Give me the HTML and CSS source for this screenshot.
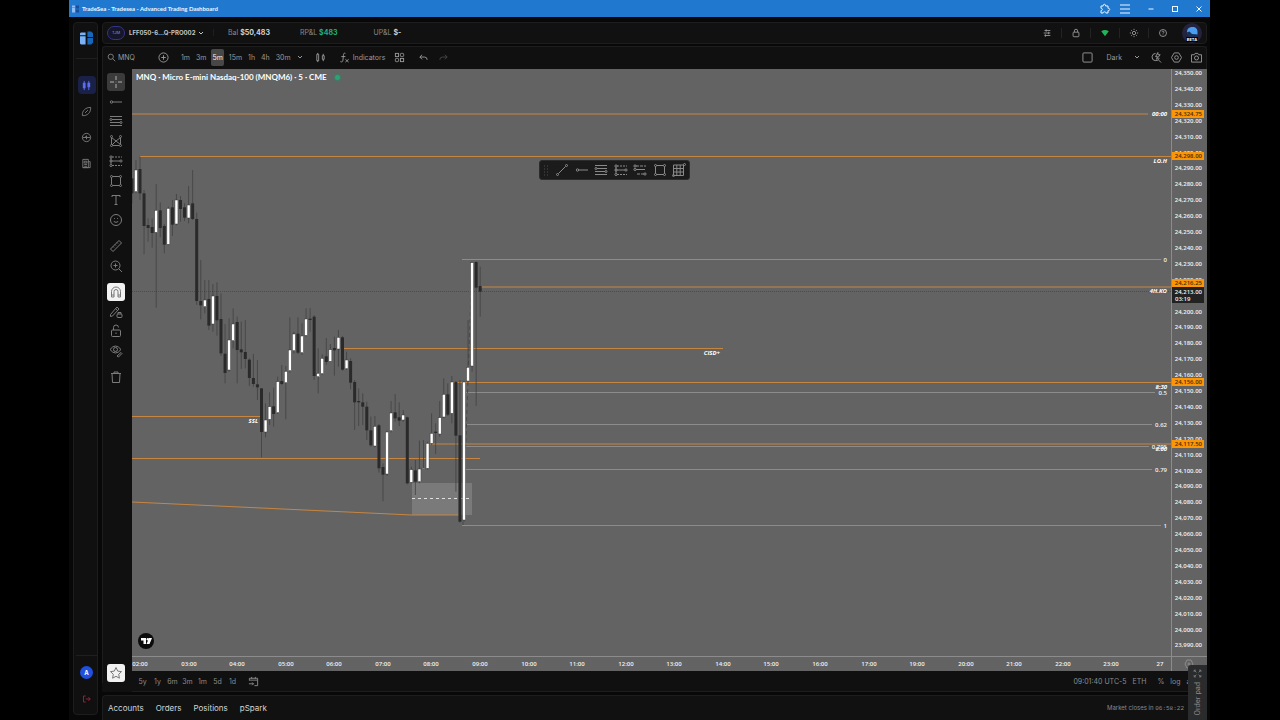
FILE: index.html
```html
<!DOCTYPE html>
<html lang="en">
<head>
    <meta charset="utf-8">
    <title>TradeSea - Tradesea - Advanced Trading Dashboard</title>
    <link rel="stylesheet" href="styles.css">
</head>
<body>
    <svg class="symbols" aria-hidden="true">
        <symbol id="i-chevron" viewBox="0 0 6 6"><path d="M1 2l2 2 2-2"/></symbol>
        <symbol id="i-ray" viewBox="0 0 14 14"><circle cx="2.5" cy="7" r="1.2"/><path d="M3.7 7H13"/></symbol>
        <symbol id="i-fib" viewBox="0 0 14 14"><path d="M1 2.500h12M3 5.500h10M1 8.500h10M1 11.500h12"/><circle cx="2" cy="5.500" r="1"/><circle cx="12" cy="8.500" r="1"/></symbol>
        <symbol id="i-long" viewBox="0 0 14 14"><path d="M3 3h10M3 11.500h10" stroke-dasharray="2 1"/><path d="M2 4v6M3 7h8"/><circle cx="2" cy="3" r="1.100"/><circle cx="2" cy="7" r="1.100"/><circle cx="2" cy="11.500" r="1.100"/><circle cx="12" cy="7" r="1.100"/></symbol>
        <symbol id="i-short" viewBox="0 0 14 14"><path d="M3 3h10M4 11h7" stroke-dasharray="3 1"/><path d="M3 6.500h9"/><circle cx="2" cy="6.500" r="1.100"/><circle cx="12" cy="11" r="1.100"/><circle cx="2" cy="3" r="1.100"/></symbol>
        <symbol id="i-rect" viewBox="0 0 14 14"><path d="M3.500 2.500h7M3.500 11.500h7M2.500 3.500v7M11.500 3.500v7"/><circle cx="2.500" cy="2.500" r="1"/><circle cx="11.500" cy="2.500" r="1"/><circle cx="2.500" cy="11.500" r="1"/><circle cx="11.500" cy="11.500" r="1"/></symbol>
    </svg>

    <div class="window">
        <header class="titlebar">
            <svg class="favicon" viewBox="0 0 14 14"><path fill="#8fbdf5" d="M0 0h6v4H0zM0 5h6v9H0z"/><path fill="#154f9d" d="M8 0h6v6H8zM8 8h6v6H8z"/></svg>
            <span class="window-title">TradeSea - Tradesea - Advanced Trading Dashboard</span>
            <div class="window-buttons">
                <button aria-label="Extensions"><svg viewBox="0 0 12 12"><path d="M2 3h2.200c-.6-2.300 3-2.300 2.400 0H9v2.300c2.300-.5 2.300 2.800 0 2.300V10H6.800C7 8.300 4 8.300 4.200 10H2V7.600c1.800.2 1.800-2.500 0-2.300z"/></svg></button>
                <button aria-label="Menu"><svg viewBox="0 0 12 12"><path d="M1 2h10M1 6h10M1 10h10"/></svg></button>
                <button class="spaced" aria-label="Minimize"><svg viewBox="0 0 12 12"><path d="M3.500 6h5"/></svg></button>
                <button class="spaced" aria-label="Maximize"><svg viewBox="0 0 12 12"><rect x="3.500" y="3.500" width="5" height="5"/></svg></button>
                <button class="spaced" aria-label="Close"><svg viewBox="0 0 12 12"><path d="M3.500 3.500l5 5M8.500 3.500l-5 5"/></svg></button>
            </div>
        </header>

        <div class="app">
            <nav class="sidebar">
                <a class="logo" href="#" aria-label="TradeSea"><svg viewBox="0 0 14 14"><path fill="#79b2f8" d="M1 1h5v3H0V2zM0 5h6v9H1l-1-1z"/><path fill="#1467bd" d="M8 0h4l2 2v4H8zM8 7h6v5l-2 2H8z"/></svg></a>
                <a class="nav-link active" href="#" aria-label="Chart"><svg viewBox="0 0 12 12"><path d="M3.500 1v10M8.500 1v10"/><path class="thick" d="M3.500 3v6M8.500 3v5"/></svg></a>
                <a class="nav-link" href="#" aria-label="Explore"><svg viewBox="0 0 12 12"><path d="M10.500 1.500C5 1.500 1 5 1.500 10.500 7 11 11 7 10.500 1.500zM4.500 7.500l3-3"/></svg></a>
                <a class="nav-link" href="#" aria-label="Replay"><svg viewBox="0 0 12 12"><circle cx="6" cy="6" r="4.500"/><path d="M2 6h8M6 4v4M4 6l2-1.500"/></svg></a>
                <a class="nav-link" href="#" aria-label="News"><svg viewBox="0 0 12 12"><path d="M2 1.500h6v9H2zM8 4h2v6.500H2M3.500 3.500h3v2h-3zM3.500 7h3M3.500 9h3"/></svg></a>
                <div class="sidebar-bottom">
                    <a class="user" href="#">A</a>
                    <button class="logout" aria-label="Log out"><svg viewBox="0 0 12 12"><path d="M5 2H2v8h3M5 6h6M8.500 3.500L11 6 8.500 8.500"/></svg></button>
                </div>
            </nav>

            <main class="main">
                <section class="account-bar">
                    <span class="pill">TJM</span>
                    <button class="account">LFF050-6...Q-PRO002 <svg class="chevron"><use href="#i-chevron"/></svg></button>
                    <span class="stat first">Bal <b>$50,483</b></span>
                    <span class="stat">RP&amp;L <b class="gain">$483</b></span>
                    <span class="stat">UP&amp;L <b>$-</b></span>
                    <div class="status-icons">
                        <button aria-label="Layout"><svg viewBox="0 0 12 12"><path d="M3 3h7M2 6h8M3 9h7M5 1.500v3M8 4.500v3M4 7.500v3"/></svg></button>
                        <button aria-label="Lock"><svg viewBox="0 0 12 12"><rect x="2.500" y="5" width="7" height="5.500" rx="1"/><path d="M4 5V3.500a2 2 0 0 1 4 0V5"/></svg></button>
                        <button aria-label="Connection"><svg viewBox="0 0 12 12"><path class="wifi" d="M1.500 4q4.500-3 9 0L6 10z"/></svg></button>
                        <button aria-label="Theme"><svg viewBox="0 0 12 12"><circle cx="6" cy="6" r="2"/><path d="M6 1v1.500M6 9.500V11M1 6h1.500M9.500 6H11M2.500 2.500l1 1M8.500 8.500l1 1M9.500 2.500l-1 1M3.500 8.500l-1 1"/></svg></button>
                        <button aria-label="Help"><svg viewBox="0 0 12 12"><circle cx="6" cy="6" r="4.200"/><path d="M4.800 5c0-1.800 2.600-1.500 2.400 0C7.100 5.800 6 5.800 6 6.800M6 8v.6"/></svg></button>
                    </div>
                    <div class="avatar">
                        <svg viewBox="0 0 14 10"><path fill="#4a9df0" d="M2 5C2 1 5 0 7.500 0 11 0 12.500 2 12.500 5V8H4L2 6.500z"/><path fill="#153057" d="M1.500 5.500l3-1L7 7l6 .5V10H4z"/></svg>
                        <span class="beta">BETA</span>
                    </div>
                </section>

                <section class="chart-panel">
                    <div class="toolbar">
                        <button class="search"><svg class="icon" viewBox="0 0 12 12"><circle cx="5" cy="5" r="3.500"/><path d="M7.500 7.500L11 11"/></svg>MNQ</button>
                        <button class="add" aria-label="Compare"><svg class="icon" viewBox="0 0 12 12"><circle cx="6" cy="6" r="5"/><path d="M6 3.500v5M3.500 6h5"/></svg></button>
                        <div class="intervals">
                            <button>1m</button>
                            <button>3m</button>
                            <button class="selected">5m</button>
                            <button>15m</button>
                            <button>1h</button>
                            <button>4h</button>
                            <button>30m</button>
                            <button aria-label="More intervals"><svg class="chevron"><use href="#i-chevron"/></svg></button>
                        </div>
                        <button aria-label="Candles"><svg class="icon" viewBox="0 0 12 12"><path d="M2 2.500h2v7H2zM3 1v1.500M3 9.500V11M8 4h2v4H8zM9 2v2M9 8v2"/></svg></button>
                        <button class="indicators"><svg class="icon" viewBox="0 0 12 12"><path d="M7 1.500C5 .8 5 2 4.800 4L4.300 9C4 11 3 11 1.500 10.500M2.500 5H7M7 8l3.500 3M10.500 8L7 11"/></svg>Indicators</button>
                        <button aria-label="Templates"><svg class="icon" viewBox="0 0 12 12"><rect x="1.500" y="1.500" width="3.500" height="3.500"/><rect x="7" y="1.500" width="3.500" height="3.500" rx="1"/><rect x="1.500" y="7" width="3.500" height="3.500" rx="1"/><rect x="7" y="7" width="3.500" height="3.500"/></svg></button>
                        <div class="history">
                            <button aria-label="Undo"><svg class="icon" viewBox="0 0 12 12"><path d="M4.500 3L2 5.500 4.500 8M2 5.500h5q3 0 3 3"/></svg></button>
                            <button class="off" aria-label="Redo"><svg class="icon" viewBox="0 0 12 12"><path d="M7.500 3L10 5.500 7.500 8M10 5.500H5q-3 0-3 3"/></svg></button>
                        </div>
                        <div class="toolbar-right">
                            <button aria-label="Layout setup"><svg class="icon" viewBox="0 0 12 12"><rect x="1" y="1" width="10" height="10" rx="1"/></svg></button>
                            <button class="theme">Dark <svg class="chevron"><use href="#i-chevron"/></svg></button>
                            <button aria-label="Quick search"><svg class="icon" viewBox="0 0 12 12"><path d="M5 1.500A4 4 0 1 0 9 6.500M8 8.500l3 3M7.500.500L5 5h2L6 8l4-5H7.500z"/></svg></button>
                            <button aria-label="Settings"><svg class="icon" viewBox="0 0 12 12"><path d="M3.500 1h5l3 5-3 5h-5l-3-5z"/><circle cx="6" cy="6" r="2"/></svg></button>
                            <button aria-label="Snapshot"><svg class="icon" viewBox="0 0 12 12"><path d="M.5 3h3l1-1.500h3l1 1.500h3v8H.5z"/><circle cx="6" cy="6.500" r="2.200"/></svg></button>
                        </div>
                    </div>

                    <div class="chart-row">
                        <div class="tools">
                            <div class="tool-group lines">
                                <button class="selected" aria-label="Crosshair"><svg viewBox="0 0 14 14"><path d="M7 1v4M7 9v4M1 7h4M9 7h4M6.700 7h.6"/></svg></button>
                                <button aria-label="Horizontal ray"><svg><use href="#i-ray"/></svg></button>
                                <button aria-label="Fib retracement"><svg><use href="#i-fib"/></svg></button>
                                <button aria-label="Patterns"><svg viewBox="0 0 14 14"><path d="M2.500 10.500v-7L7 7l4.500-3.500v7L7 7l-4 4M4 11.500h6"/><circle cx="2.500" cy="2.500" r="1"/><circle cx="11.500" cy="2.500" r="1"/><circle cx="2.500" cy="11.500" r="1"/><circle cx="11.500" cy="11.500" r="1"/></svg></button>
                                <button aria-label="Position"><svg><use href="#i-long"/></svg></button>
                                <button aria-label="Rectangle"><svg><use href="#i-rect"/></svg></button>
                                <button aria-label="Text"><svg viewBox="0 0 14 14"><path d="M3 4V2.500h8V4M7 2.500v9M5.500 11.500h3"/></svg></button>
                                <button aria-label="Icons"><svg viewBox="0 0 14 14"><circle cx="7" cy="7" r="5.500"/><path d="M5 5.500h.8M8.200 5.500H9M4.800 8.500q2.200 1.800 4.400 0"/></svg></button>
                            </div>
                            <div class="tool-group measure">
                                <button aria-label="Measure"><svg viewBox="0 0 14 14"><path d="M1.500 10l8.500-8.500L12.500 4 4 12.500zM4 7.500L5 8.500M6 5.500l1 1M8 3.500l1 1"/></svg></button>
                                <button aria-label="Zoom in"><svg viewBox="0 0 14 14"><circle cx="6.500" cy="6.500" r="4.500"/><path d="M10 10l3 3M6.500 4.500v4M4.500 6.500h4"/></svg></button>
                            </div>
                            <div class="tool-group modes">
                                <button class="on" aria-label="Magnet"><svg viewBox="0 0 14 14"><path d="M2.500 12V6.500a4.500 4.500 0 0 1 9 0V12H9V6.500a2 2 0 0 0-4 0V12zM2.500 10H5M9 10h2.500"/></svg></button>
                                <button aria-label="Keep drawing"><svg viewBox="0 0 14 14"><path d="M1.500 9.500L8 2l2 2-6.500 7-2 .5zM6.500 3.500l2 2"/><rect x="8" y="9" width="5" height="3.500" rx="1"/><path d="M9 9V7.500h3V9"/></svg></button>
                                <button aria-label="Lock drawings"><svg viewBox="0 0 14 14"><rect x="2.500" y="6" width="9" height="6.500" rx="1"/><path d="M4.500 6V3.500a2.500 2.500 0 0 1 5 0M7 8.500v1.500"/></svg></button>
                                <button aria-label="Hide drawings"><svg viewBox="0 0 14 14"><path d="M1 5.500q5.500-7 11 0-5.500 7-11 0z"/><circle cx="6.500" cy="5.500" r="2"/><path d="M8 12l4-3.500 1 1L9.500 13z"/></svg></button>
                            </div>
                            <div class="tool-group">
                                <button aria-label="Remove"><svg viewBox="0 0 14 14"><path d="M2 3.500h10M5 3.500V2h4v1.500M3 3.500l.5 9h7l.5-9"/></svg></button>
                            </div>
                            <button class="on favorites" aria-label="Favorites"><svg viewBox="0 0 14 14"><path d="M7 1.500l1.700 3.600 3.800.5-2.800 2.700.7 3.900L7 10.300l-3.400 1.900.7-3.900L1.500 5.600l3.800-.5z"/></svg></button>
                        </div>

                        <div class="chart">
                            <svg id="chart" viewBox="132 69 1075 602" role="img" aria-label="MNQ 5 minute candles"></svg>
                            <h1 class="symbol">MNQ · Micro E-mini Nasdaq-100 (MNQM6) · 5 · CME <i class="dot"></i></h1>
                            <div class="floating">
                                <button class="grip" aria-label="Move"><svg viewBox="0 0 14 14"><path d="M5 3h1M8 3h1M5 6h1M8 6h1M5 9h1M8 9h1M5 12h1M8 12h1"/></svg></button>
                                <button aria-label="Trend line"><svg viewBox="0 0 14 14"><circle cx="2.500" cy="11.500" r="1"/><circle cx="11.500" cy="2.500" r="1"/><path d="M3.500 10.500l7-7"/></svg></button>
                                <button aria-label="Horizontal ray"><svg><use href="#i-ray"/></svg></button>
                                <button aria-label="Fib retracement"><svg><use href="#i-fib"/></svg></button>
                                <button aria-label="Long position"><svg><use href="#i-long"/></svg></button>
                                <button aria-label="Short position"><svg><use href="#i-short"/></svg></button>
                                <button aria-label="Rectangle"><svg><use href="#i-rect"/></svg></button>
                                <button aria-label="Grid"><svg viewBox="0 0 14 14"><path d="M1.500 2h10v10.500h-10zM4.800 2v10.500M8.200 2v10.500M1.500 5.500h10M1.500 9h10"/><circle cx="12.500" cy="1.500" r="1"/><circle cx="1.500" cy="12.500" r="1"/></svg></button>
                            </div>
                        </div>
                    </div>

                    <div class="range-bar">
                        <button>5y</button>
                        <button>1y</button>
                        <button>6m</button>
                        <button>3m</button>
                        <button>1m</button>
                        <button>5d</button>
                        <button>1d</button>
                        <button class="goto" aria-label="Go to date"><svg class="icon" viewBox="0 0 12 12"><path d="M1.500 5V2.500h9v8H7M1.500 4.500h9M4 1v2M8 1v2M1 8.500h5M4.500 7L6 8.500 4.500 10"/></svg></button>
                        <div class="range-right">
                            <button>09:01:40 UTC-5</button>
                            <button>ETH</button>
                            <button class="percent">%</button>
                            <button>log</button>
                            <button>auto</button>
                        </div>
                    </div>
                </section>

                <footer class="tabs">
                    <a href="#">Accounts</a>
                    <a href="#">Orders</a>
                    <a href="#">Positions</a>
                    <a href="#">pSpark</a>
                    <span class="closes">Market closes in <span class="mono">06:58:22</span></span>
                </footer>
            </main>

            <button class="order-pad"><svg viewBox="0 0 12 12"><path d="M1.500 4V1.500H4M8 1.500h2.500V4M10.500 8v2.500H8M4 10.500H1.500V8M2 2l2.500 2.500M10 2L7.500 4.500M10 10L7.500 7.500M2 10l2.500-2.500"/></svg><span>Order pad</span></button>
        </div>
    </div>
    <script src="chart.js"></script>
</body>
</html>
```
FILE: styles.css
```css
* {
    box-sizing: border-box;
}
body {
    margin: 0;
    background: #000;
    color: #b4b4b4;
    font-family: Inter, "Liberation Sans", sans-serif;
    font-size: 7px;
}
button {
    display: flex;
    align-items: center;
    justify-content: center;
    padding: 0;
    border: 0;
    background: none;
    color: inherit;
    font: inherit;
    white-space: nowrap;
    cursor: pointer;
}
a {
    color: inherit;
    text-decoration: none;
}
svg {
    display: block;
    flex: none;
    fill: none;
    stroke: currentColor;
    stroke-width: 1;
}
.symbols {
    position: absolute;
    width: 0;
    height: 0;
}
.window {
    display: flex;
    flex-direction: column;
    height: 100vh;
    padding: 0 70px 0 69px;
    overflow: hidden;
}

/* title bar */
.titlebar {
    display: flex;
    align-items: center;
    height: 17px;
    flex: none;
    padding: 0 5px 0 3px;
    background: #2079cf;
    color: #eef6ff;
}
.favicon {
    width: 7px;
    height: 8px;
    margin-right: 3px;
    stroke: none;
}
.window-title {
    font: 700 6px Lato, sans-serif;
}
.window-buttons {
    display: flex;
    margin-left: auto;
    gap: 8px;
}
.window-buttons svg {
    width: 12px;
    height: 12px;
}
.window-buttons .spaced {
    margin-left: 6px;
}
.window-buttons .spaced + .spaced {
    margin-left: 4px;
}

.app {
    position: relative;
    display: flex;
    flex: 1;
    min-height: 0;
    gap: 4px;
    padding: 5px 3px 0 4px;
    background: #080808;
}

/* left navigation */
.sidebar {
    display: flex;
    flex-direction: column;
    align-items: center;
    width: 25px;
    margin-bottom: 5px;
    padding-left: 2px;
    border: 1px solid #1d1d1d;
    border-radius: 4px;
    background: #101010;
}
.logo {
    width: 21px;
    padding: 8px 4px 13px;
    margin-bottom: 17px;
    border-bottom: 1px solid #1f1f1f;
}
.logo svg {
    width: 13px;
    height: 14px;
    stroke: none;
}
.nav-link {
    display: flex;
    align-items: center;
    justify-content: center;
    width: 18px;
    height: 18px;
    margin-bottom: 8px;
    border-radius: 4px;
    color: #7d7d7d;
}
.nav-link svg {
    width: 11px;
    height: 11px;
}
.nav-link.active {
    background: #1a2148;
    color: #5d6df0;
}
.thick {
    stroke-width: 3;
}
.sidebar-bottom {
    display: flex;
    flex-direction: column;
    align-items: center;
    width: 21px;
    margin-top: auto;
    padding: 10px 0;
    gap: 15px;
    border-top: 1px solid #1f1f1f;
}
.user {
    width: 13px;
    border-radius: 50%;
    background: #2050dc;
    color: #fff;
    font-size: 6px;
    font-weight: 700;
    line-height: 13px;
    text-align: center;
}
.logout {
    color: #b8264a;
}
.logout svg {
    width: 9px;
    height: 10px;
}

.main {
    display: flex;
    flex-direction: column;
    flex: 1;
    min-width: 0;
}

/* account bar */
.account-bar {
    display: flex;
    align-items: center;
    height: 22px;
    flex: none;
    margin-bottom: 2px;
    padding: 0 4px 1px;
    border: 1px solid #1d1d1d;
    border-radius: 4px;
    background: #111;
}
.pill {
    width: 18px;
    border: 1px solid #34348a;
    border-radius: 7px;
    background: #15152c;
    color: #8f93c8;
    font-size: 4px;
    line-height: 12px;
    text-align: center;
}
.account {
    justify-content: flex-start;
    gap: 3px;
    width: 89px;
    padding-left: 4px;
    border-right: 1px solid #1f1f1f;
    color: #c4c4c4;
    font-size: 6px;
    font-weight: 700;
}
.chevron {
    width: 6px;
    height: 6px;
}
.stat {
    margin-left: 30px;
    color: #8a8a8a;
}
.stat + .stat + .stat {
    margin-left: 36px;
}
.stat.first {
    margin-left: 14px;
}
.stat b {
    color: #d2d2d2;
}
.stat .gain {
    color: #22b07d;
}
.status-icons {
    display: flex;
    margin-left: auto;
}
.status-icons button {
    width: 29px;
    height: 10px;
    border-left: 1px solid #232323;
    color: #a2a2a2;
}
.status-icons button:first-child {
    border-left: 0;
}
.status-icons svg {
    width: 10px;
    height: 10px;
}
.wifi {
    fill: #22b455;
    stroke: none;
}
.avatar {
    display: flex;
    flex-direction: column;
    align-items: center;
    width: 20px;
    height: 20px;
    margin-left: 5px;
    padding-top: 4px;
    border-radius: 50%;
    background: #23233d;
}
.avatar svg {
    width: 14px;
    height: 10px;
    stroke: none;
}
.beta {
    padding: 0 1px;
    background: #000;
    color: #fff;
    font-size: 4px;
    font-weight: 700;
    line-height: 5px;
}

/* chart panel */
.chart-panel {
    display: flex;
    flex-direction: column;
    flex: 1;
    min-height: 0;
    background: #101010;
}
.toolbar {
    display: flex;
    align-items: center;
    height: 23px;
    flex: none;
    padding: 0 4px 2px;
    border: 1px solid #1d1d1d;
    border-bottom: 0;
    border-radius: 4px 4px 0 0;
    color: #9a9a9a;
}
.icon {
    width: 11px;
    height: 11px;
}
.search {
    gap: 2px;
    width: 51px;
    justify-content: flex-start;
}
.search .icon {
    width: 9px;
    height: 9px;
}
.intervals {
    display: flex;
    margin: 0 9px;
}
.intervals button {
    height: 17px;
    padding: 0 3px;
    border-radius: 2px;
}
.intervals .selected {
    padding: 0 1px;
    margin: 0 2px;
    background: #474747;
    color: #f0f0f0;
}
.indicators {
    margin: 0 9px 0 13px;
    gap: 3px;
}
.history {
    display: flex;
    gap: 9px;
    margin-left: 13px;
}
.history .off {
    color: #484848;
}
.toolbar-right {
    display: flex;
    align-items: center;
    gap: 9px;
    margin-left: auto;
}
.theme {
    gap: 12px;
    margin: 0 2px 0 4px;
}
.chart-row {
    display: flex;
    flex: 1;
    min-height: 0;
}
.tools {
    display: flex;
    flex-direction: column;
    align-items: center;
    width: 30px;
    gap: 8px;
    padding: 4px 3px 0 0;
    margin-bottom: -12px;
    border-left: 1px solid #1d1d1d;
    color: #7c7c7c;
}
.tools button {
    width: 18px;
    height: 18px;
    border-radius: 3px;
}
.tools svg,
.floating svg {
    width: 14px;
    height: 14px;
}
.tools .selected {
    background: #3b3b3b;
    color: #b0b0b0;
}
.tools .on {
    background: #f2f2f2;
    color: #777;
}
.tool-group {
    display: flex;
    flex-direction: column;
    justify-content: space-between;
}
.lines {
    height: 156px;
}
.measure {
    height: 38px;
}
.modes {
    height: 77px;
}
.tools .favorites {
    margin: auto 0 1px;
}
.chart {
    position: relative;
    flex: 1;
    min-width: 0;
    background: #636363;
}
#chart {
    width: 100%;
    height: 100%;
    font-family: "Open Sans", sans-serif;
}
#chart text {
    stroke: none;
    fill: #f2f2f2;
    font-size: 6px;
    font-weight: 600;
}
#chart .note {
    font-weight: 700;
    font-style: italic;
    fill: #fff;
}
#chart .dark-text {
    fill: #4a2c00;
}
.wick {
    stroke: #3c3c3c;
}
.down {
    fill: #2a2a2a;
    stroke: none;
}
.up {
    fill: #fff;
    stroke: #3c3c3c;
}
.level {
    stroke: #c68642;
}
.fib {
    stroke: #8c8c8c;
}
.axis {
    stroke: #8c8c8c;
}
.now {
    stroke: #4c4c4c;
    stroke-dasharray: 1 1;
}
.zone {
    fill: #7a7a7a;
    stroke: none;
}
.zone-mid {
    stroke: #e0e0e0;
    stroke-dasharray: 3 3;
}
.fib-trend {
    stroke: #4a4a4a;
    stroke-dasharray: 4 3;
}
.tag {
    fill: #fb9608;
    stroke: none;
}
.tag-now {
    fill: #222;
    stroke: none;
}
.tv-bg {
    fill: #0c0c0c;
    stroke: none;
}
.tv-logo {
    fill: #fff;
    stroke: none;
}
.symbol {
    position: absolute;
    top: 3px;
    left: 4px;
    margin: 0;
    color: #fff;
    font: 700 8px/11px Lato, sans-serif;
    white-space: nowrap;
}
.dot {
    display: inline-block;
    width: 5px;
    height: 5px;
    margin-left: 7px;
    border-radius: 50%;
    background: #2aa377;
    box-shadow: 0 0 2px 1px #3a8065;
}
.floating {
    position: absolute;
    top: 91px;
    left: 407px;
    display: flex;
    align-items: center;
    width: 151px;
    height: 20px;
    padding: 0 3px 0 1px;
    border: 1px solid #2c2c2c;
    border-radius: 3px;
    background: #1b1b1b;
    color: #8a8a8a;
    justify-content: space-between;
}
.floating .grip {
    width: 9px;
    color: #4c4c4c;
}
.range-bar {
    display: flex;
    align-items: center;
    height: 21px;
    flex: none;
    margin-left: 30px;
    padding: 0 6px 0 3px;
    border-bottom: 1px solid #1d1d1d;
    color: #8c8c8c;
}
.range-bar > button {
    min-width: 15px;
}
.range-bar .goto {
    margin-left: 6px;
}
.range-right {
    display: flex;
    margin-left: auto;
    gap: 6px;
}
.range-right .percent {
    margin-left: 5px;
}

/* bottom tabs */
.tabs {
    display: flex;
    align-items: center;
    height: 25px;
    flex: none;
    margin-top: 3px;
    gap: 12px;
    padding: 0 22px 1px 5px;
    border: 1px solid #1d1d1d;
    border-bottom: 0;
    border-radius: 4px 4px 0 0;
    background: #111;
    color: #d4d4d4;
    font-size: 8px;
}
.closes {
    margin-left: auto;
    color: #8a8a8a;
    font-size: 6px;
}
.mono {
    font-family: "Liberation Mono", monospace;
}
.order-pad {
    position: absolute;
    right: 3px;
    bottom: 0;
    flex-direction: column;
    gap: 4px;
    width: 19px;
    height: 55px;
    border-radius: 3px 0 0 0;
    background: #292b2c;
    color: #8a8a8a;
}
.order-pad svg {
    width: 9px;
    height: 9px;
}
.order-pad span {
    writing-mode: vertical-rl;
    transform: rotate(180deg);
}
```
FILE: chart.js
```js
const svg = document.getElementById('chart');

function add(tag, cls, attrs, text) {
    const el = document.createElementNS('http://www.w3.org/2000/svg', tag);
    if (cls) el.setAttribute('class', cls);
    for (const key in attrs) el.setAttribute(key, attrs[key]);
    if (text) el.textContent = text;
    svg.appendChild(el);
    return el;
}

function line(cls, x1, y1, x2, y2) {
    add('line', cls, { x1: x1, y1: y1, x2: x2, y2: y2 });
}

function label(text, x, y, anchor, cls) {
    add('text', cls, { x: x, y: y, 'text-anchor': anchor }, text);
}

// up (1) or down (0), body top, body bottom, high, low; three steps to a unit
const night = [
    [0,85,130,85,160],[1,60,125,30,130],[0,57,130,20,150],[0,130,228,120,313],[0,225,234,205,275],
    [0,231,249,205,293],[1,181,247,102,473],[0,181,234,157,262],[0,228,284,222,310],[1,175,283,170,286],
    [0,172,224,150,258],[1,150,222,132,226],[0,150,177,138,215],[0,172,203,160,213],[1,165,204,108,220],
    [0,160,207,60,210],[0,207,453,188,465],[0,453,466,330,508],[1,450,470,390,490],[0,447,527,390,540],
    [1,438,522,402,545],[0,438,511,397,557],[0,507,610,430,618],[0,611,669,522,700],[1,570,660,505,665],
    [1,522,572,475,595],[0,516,600,500,700],[0,598,607,515,657],[0,606,627,510,655],[0,629,684,625,708],
    [0,684,702,612,710],[0,703,712,630,750],[0,715,846,715,922],[1,810,846,760,862],[1,770,808,727,825],
    [0,769,792,713,830],[1,695,788,680,792],[0,693,702,645,705],[1,664,698,648,808],[1,600,662,502,668],
    [1,552,602,545,610],[0,551,608,502,612],[1,558,608,520,615],[1,507,556,475,560],[0,506,510,474,545],
    [0,500,678,495,690]
];
const morning = [
    [1,370,380,295,430],[1,325,371,313,375],[0,319,336,264,345],[1,299,334,282,335],[0,294,301,260,377],
    [1,262,297,240,350],[0,262,359,258,362],[1,330,356,305,360],[0,333,398,325,418],[0,396,457,390,540],
    [0,453,457,415,528],[0,457,470,430,525],[0,470,541,455,570],[0,541,586,500,590],[1,529,588,498,592],
    [0,526,655,522,668],[0,651,674,640,754],[1,546,672,542,678],[1,489,542,453,547],[0,487,505,432,515],
    [0,502,512,457,528],[1,495,510,480,515],[0,502,700,500,703],[1,659,697,650,700],[0,661,695,630,735],
    [1,657,695,572,700],[1,655,658,570,660],[1,580,655,575,660],[1,550,580,490,585],[0,545,549,520,612],
    [1,503,552,453,560],[1,433,501,385,505],[0,433,494,400,498],[1,396,490,378,520],[0,396,557,393,725],
    [0,556,815,390,818],[1,396,810,392,815],[1,352,393,210,395],[1,38,348,35,365],[0,36,113,34,468],
    [0,108,125,50,200]
];

function candles(list, first, base) {
    list.forEach(function (c, i) {
        const x = 140 + (first + i) * 4.05;
        const y = function (v) { return base + v / 3; };
        add('line', 'wick', { x1: x, x2: x, y1: y(c[3]), y2: y(c[4]), 'stroke-width': 0.7 });
        add('rect', c[0] ? 'up' : 'down', {
            x: x - 1.5, y: y(c[1]), width: 3, height: Math.max(1, y(c[2]) - y(c[1])), 'stroke-width': 0.5
        });
    });
}

// zone and levels
add('rect', 'zone', { x: 412, y: 483, width: 60, height: 32 });
line('zone-mid', 412, 498.5, 472, 498.5);
line('now', 132, 291.5, 1171, 291.5);
[[114, 132, 1148], [156.5, 140, 1171], [287, 480, 1171], [348.5, 344, 723], [382.5, 452, 1171],
 [444, 430, 1171], [416.5, 132, 260], [458.5, 132, 480]].forEach(function (l) {
    line('level', l[1], l[0], l[2], l[0]);
});
add('polyline', 'level', { points: '132,502 412,515 460,515' });
[[259.5, 462, '0'], [392.5, 466, '0.5'], [424.5, 466, '0.62'], [446.5, 466, '0.705'],
 [469.5, 466, '0.79'], [525.5, 462, '1']].forEach(function (f) {
    line('fib', f[1], f[0], 1164 - f[2].length * 3, f[0]);
    label(f[2], 1167, f[0] + 2, 'end');
});
line('fib-trend', 472, 263, 463, 525);

candles(night, -2, 150);
candles(morning, 44, 250);

label('00:00', 1167, 116, 'end', 'note');
label('LO.H', 1167, 163, 'end', 'note');
label('4H.KO', 1167, 293, 'end', 'note');
label('CISD+', 720, 355, 'end', 'note');
label('8:30', 1167, 389, 'end', 'note');
label('8:00', 1167, 451, 'end', 'note');
label('SSL', 258, 423, 'end', 'note');

// price scale
line('axis', 1171.5, 69, 1171.5, 671);
line('axis', 132, 656.5, 1207, 656.5);
for (let i = 0; i <= 36; i++) {
    const price = 24350 - i * 10;
    if (price === 24210) continue;
    label(price.toLocaleString('en-US') + '.00', 1202, Math.round(75 + i * 15.9), 'end');
}
[['24,324.75', 114], ['24,298.00', 156], ['24,216.25', 283], ['24,156.00', 382], ['24,117.50', 444]].forEach(function (t) {
    add('rect', 'tag', { x: 1172, y: t[1] - 4, width: 32, height: 8 });
    label(t[0], 1202, t[1] + 2, 'end', 'dark-text');
});
add('rect', 'tag-now', { x: 1172, y: 287, width: 32, height: 16 });
label('24,213.00', 1202, 294, 'end');
label('03:19', 1175, 301, 'start');

// time scale
['02:00', '03:00', '04:00', '05:00', '06:00', '07:00', '08:00', '09:00', '10:00', '11:00', '12:00', '13:00',
 '14:00', '15:00', '16:00', '17:00', '19:00', '20:00', '21:00', '22:00', '23:00', '27'].forEach(function (t, i) {
    label(t, Math.round(140 + i * 48.57), 666, 'middle');
});
add('path', 'axis', { d: 'M1187 660h4l2 4-2 4h-4l-2-4z' });
add('circle', 'axis', { cx: 1189, cy: 664, r: 1 });

add('circle', 'tv-bg', { cx: 146, cy: 641, r: 8 });
add('path', 'tv-logo', { d: 'M141 638h5v6h-2.500v-3.500H141zM149 638h3l-2.500 6h-3z' });
add('circle', 'tv-logo', { cx: 147.8, cy: 639.2, r: 1.2 });
```
